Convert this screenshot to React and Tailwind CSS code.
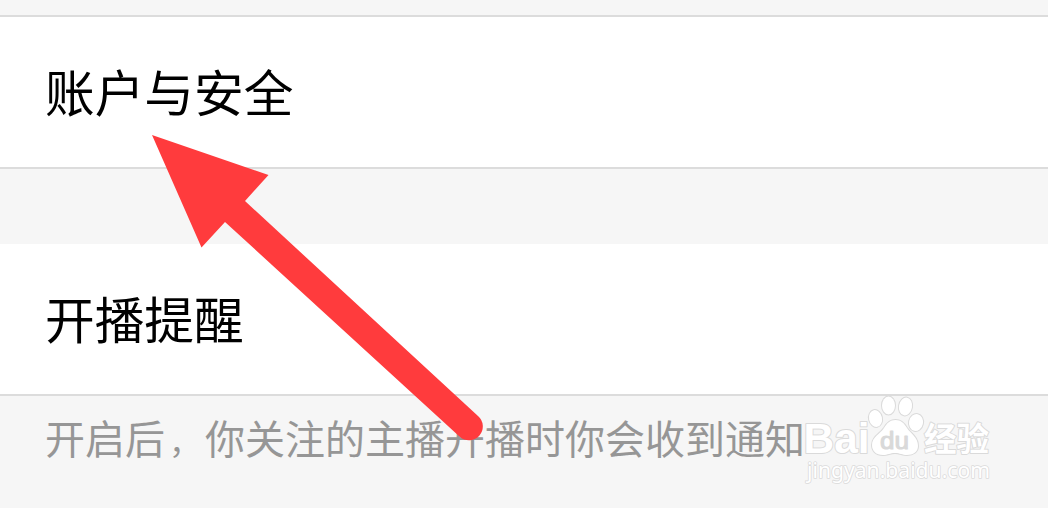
import React from 'react';

function SettingRow({ title, className }) {
  return (
    <div className={`flex items-center bg-white pl-[45px] ${className}`}>
      <span className="text-[49.7px] leading-none text-black">{title}</span>
    </div>
  );
}

function Arrow() {
  return (
    <svg className="absolute left-0 top-0" width="1048" height="508" viewBox="0 0 1048 508">
      <path
        d="M152 135L268.500 175L245 201L478 416A13.5 13.5 0 0 1 460 437L225 222L201.500 247.500Z"
        fill="#ff3b3d"
      />
    </svg>
  );
}

// Semi-transparent brand mark in the bottom right corner
function Watermark() {
  return (
    <svg
      className="absolute left-[800px] top-[390px]"
      width="200"
      height="100"
      viewBox="0 0 200 100"
      fill="#ffffff"
      stroke="#dadada"
      strokeWidth="2"
      strokeLinejoin="round"
      paintOrder="stroke"
    >
      <text x="3.500" y="63" className="font-['Liberation_Sans',sans-serif] text-[42px] font-bold" textLength="66" lengthAdjust="spacingAndGlyphs">Bai</text>
      <ellipse cx="75.5" cy="28.5" rx="6.5" ry="8.5" transform="rotate(-12 75.5 28.5)" />
      <ellipse cx="88.5" cy="15.5" rx="6.5" ry="9" />
      <ellipse cx="105.5" cy="16.5" rx="6.5" ry="9" transform="rotate(10 105.5 16.5)" />
      <ellipse cx="116" cy="32.5" rx="7" ry="8.5" transform="rotate(12 116 32.5)" />
      <path d="M95.500 30C101 30 104 33 107 38C111 44 118 47 118 56C118 62 113 65 107 65C102 65 100 63 95 63C90 63 88 65 83 65C76 65 72 61 72 55C72 47 80 44 84 38C87 33 90 30 95.500 30Z" />
      <text x="80" y="59" className="font-['Liberation_Sans',sans-serif] text-[23px]" fill="#d9d9d9" stroke="#d9d9d9" strokeWidth="1" textLength="29" lengthAdjust="spacingAndGlyphs">du</text>
      <text x="124" y="60.500" className="font-['Noto_Sans_CJK_SC',sans-serif] text-[33px] font-bold" textLength="65" lengthAdjust="spacingAndGlyphs">经验</text>
      <text x="7" y="88" className="font-['Noto_Sans',sans-serif] text-[21.5px]" strokeWidth="1.6" textLength="183" lengthAdjust="spacingAndGlyphs">jingyan.baidu.com</text>
    </svg>
  );
}

export default function App() {
  return (
    <div className="relative flex h-[508px] w-[1048px] flex-col overflow-hidden bg-[#f6f6f6] font-['Noto_Sans_CJK_SC',sans-serif]">
      <div className="h-[15px] shrink-0" />
      <SettingRow title="账户与安全" className="h-[154px] shrink-0 border-y-2 border-[#dcdcdc] pb-[3px]" />
      <div className="h-[75px] shrink-0" />
      <SettingRow title="开播提醒" className="h-[152px] shrink-0 border-b-2 border-[#dcdcdc] pb-0.5" />
      <p className="mt-[21px] whitespace-nowrap pl-[45px] text-[40px] leading-[40px] text-[#969696]">
        开启后
        <span className="inline-block w-[40px] pl-[4px] text-[32px] leading-none">，</span>
        你关注的主播开播时你会收到通知
      </p>
      <Arrow />
      <Watermark />
    </div>
  );
}
